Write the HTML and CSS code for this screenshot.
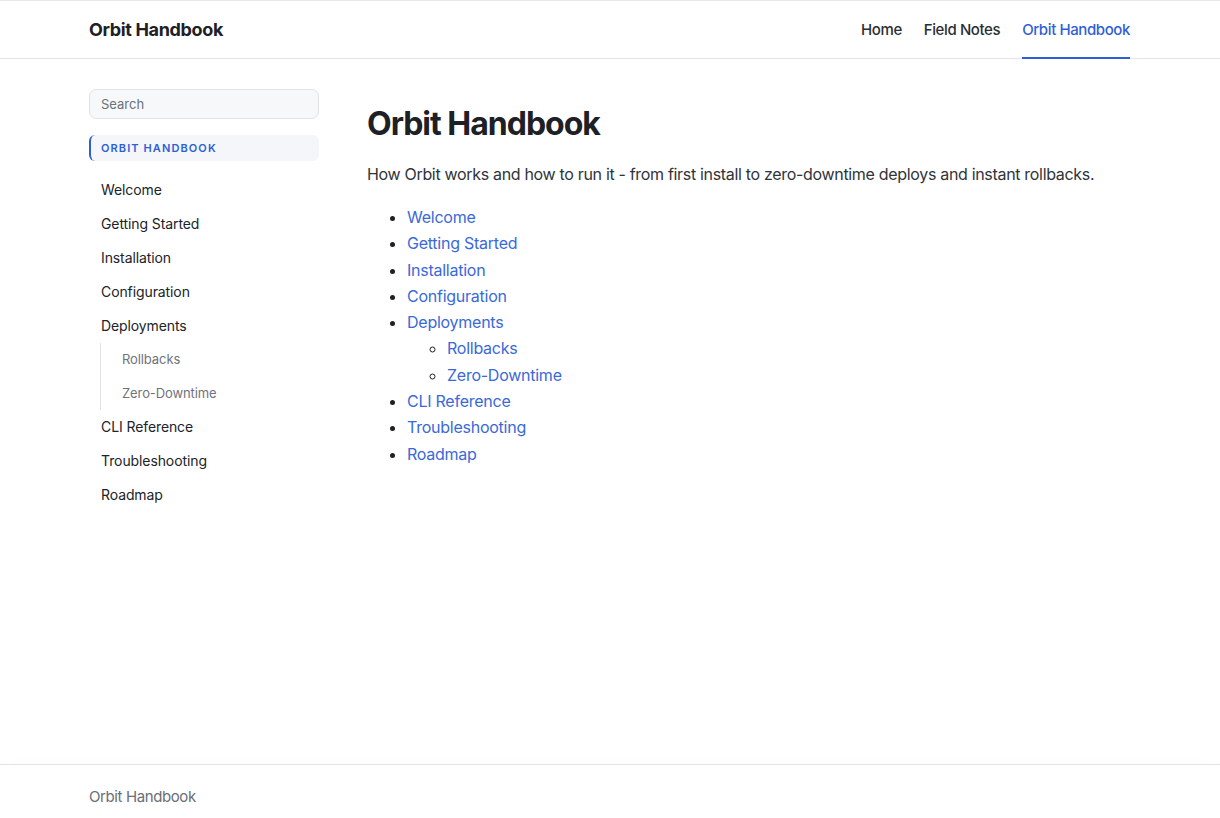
FILE: index.html
```html
<!DOCTYPE html>
<html lang="en">
<head>
    <meta charset="UTF-8">
    <title>Orbit Handbook</title>
    <link rel="stylesheet" href="styles.css">
</head>
<body>
<header class="topbar">
    <div class="wrap topbar-inner">
        <a class="brand" href="#">Orbit Handbook</a>
        <nav class="topnav">
            <a href="#">Home</a>
            <a href="#">Field Notes</a>
            <a href="#" class="active">Orbit Handbook</a>
        </nav>
    </div>
</header>

<div class="wrap page">
    <aside class="sidebar">
        <input class="search" type="text" placeholder="Search">
        <div class="section-title">Orbit Handbook</div>
        <ul class="side-nav">
            <li><a href="#">Welcome</a></li>
            <li><a href="#">Getting Started</a></li>
            <li><a href="#">Installation</a></li>
            <li><a href="#">Configuration</a></li>
            <li><a href="#">Deployments</a>
                <ul class="side-sub">
                    <li><a href="#">Rollbacks</a></li>
                    <li><a href="#">Zero-Downtime</a></li>
                </ul>
            </li>
            <li><a href="#">CLI Reference</a></li>
            <li><a href="#">Troubleshooting</a></li>
            <li><a href="#">Roadmap</a></li>
        </ul>
    </aside>

    <main class="content">
        <h1>Orbit Handbook</h1>
        <p>How Orbit works and how to run it - from first install to zero-downtime deploys and instant rollbacks.</p>
        <ul class="toc">
            <li><a href="#">Welcome</a></li>
            <li><a href="#">Getting Started</a></li>
            <li><a href="#">Installation</a></li>
            <li><a href="#">Configuration</a></li>
            <li><a href="#">Deployments</a>
                <ul>
                    <li><a href="#">Rollbacks</a></li>
                    <li><a href="#">Zero-Downtime</a></li>
                </ul>
            </li>
            <li><a href="#">CLI Reference</a></li>
            <li><a href="#">Troubleshooting</a></li>
            <li><a href="#">Roadmap</a></li>
        </ul>
    </main>
</div>

<footer class="footer">
    <div class="wrap">Orbit Handbook</div>
</footer>
</body>
</html>
```

FILE: styles.css
```css
* {
    padding: 0;
    margin: 0;
    box-sizing: border-box;
}

html, body {
    height: 100%;
}

body {
    font-family: Inter, "Noto Sans", "Liberation Sans", sans-serif;
    color: #2b3036;
    background: #fff;
    display: flex;
    flex-direction: column;
    min-height: 100vh;
    border-top: 1px solid #ebe4ee;
}

a {
    text-decoration: none;
    color: inherit;
}

li {
    list-style: none;
}

.wrap {
    width: 1042px;
    margin: 0 auto;
}

/* top bar */
.topbar {
    border-bottom: 1px solid #e3e3e8;
    height: 58px;
}

.topbar-inner {
    display: flex;
    align-items: stretch;
    justify-content: space-between;
    height: 100%;
}

.brand {
    display: flex;
    align-items: center;
    font-size: 18px;
    font-weight: 700;
    color: #1d2025;
    letter-spacing: -0.35px;
}

.topnav {
    display: flex;
    gap: 22px;
    padding-right: 1px;
}

.topnav a {
    display: flex;
    align-items: center;
    font-size: 15px;
    font-weight: 500;
    letter-spacing: -0.4px;
    color: #2a2e33;
    border-bottom: 2px solid transparent;
    padding-top: 1px;
    margin-bottom: -1px;
}

.topnav a.active {
    color: #2f5fd6;
    border-bottom-color: #2f5fd6;
}

/* page */
.page {
    flex: 1;
    display: flex;
    gap: 48px;
    padding-top: 30px;
}

.sidebar {
    width: 230px;
    flex-shrink: 0;
}

.search {
    display: block;
    width: 100%;
    height: 30px;
    border: 1px solid #e1e3e8;
    border-radius: 7px;
    background: #f7f8fa;
    padding: 0 11px;
    font-family: inherit;
    font-size: 13px;
    color: #2b3036;
    outline: none;
}

.search::placeholder {
    color: #6b7079;
}

.section-title {
    margin-top: 16px;
    height: 26px;
    line-height: 26px;
    background: #f5f6f9;
    border-left: 2px solid #2f5fd6;
    border-radius: 6px;
    padding-left: 10px;
    font-size: 11px;
    font-weight: 600;
    letter-spacing: 1.1px;
    text-transform: uppercase;
    color: #2f5fd6;
}

.side-nav {
    margin-top: 12px;
}

.side-nav a {
    display: block;
    height: 34px;
    line-height: 34px;
    padding-left: 12px;
    font-size: 14px;
    letter-spacing: -0.1px;
    color: #202328;
}

.side-sub {
    margin-left: 11px;
    border-left: 1px solid #e2e3e7;
}

.side-sub a {
    height: 33.5px;
    line-height: 33.5px;
    padding-left: 21px;
    font-size: 13px;
    color: #6f737b;
}

/* content */
.content {
    flex: 1;
}

.content h1 {
    font-size: 32px;
    line-height: 40px;
    font-weight: 700;
    color: #1d2025;
    margin-top: 15px;
    letter-spacing: -1px;
}

.content p {
    margin-top: 17px;
    font-size: 16px;
    line-height: 26px;
    letter-spacing: -0.32px;
    color: #2f343a;
}

.toc {
    margin-top: 17px;
    padding-left: 40px;
    font-size: 16px;
    line-height: 26.3px;
    letter-spacing: -0.25px;
}

.toc li {
    list-style: disc;
}

.toc ul {
    padding-left: 40px;
}

.toc ul li {
    list-style: circle;
}

.toc a {
    color: #3a69d8;
}

.toc li::marker {
    color: #1d2025;
}

/* footer */
.footer {
    height: 54px;
    border-top: 1px solid #e1e5e6;
    box-shadow: 0 -12px 12px -10px rgba(0, 0, 0, 0.015);
    display: flex;
    align-items: center;
    font-size: 15px;
    letter-spacing: -0.4px;
    color: #6a6e76;
    padding-top: 10px;
}
```
